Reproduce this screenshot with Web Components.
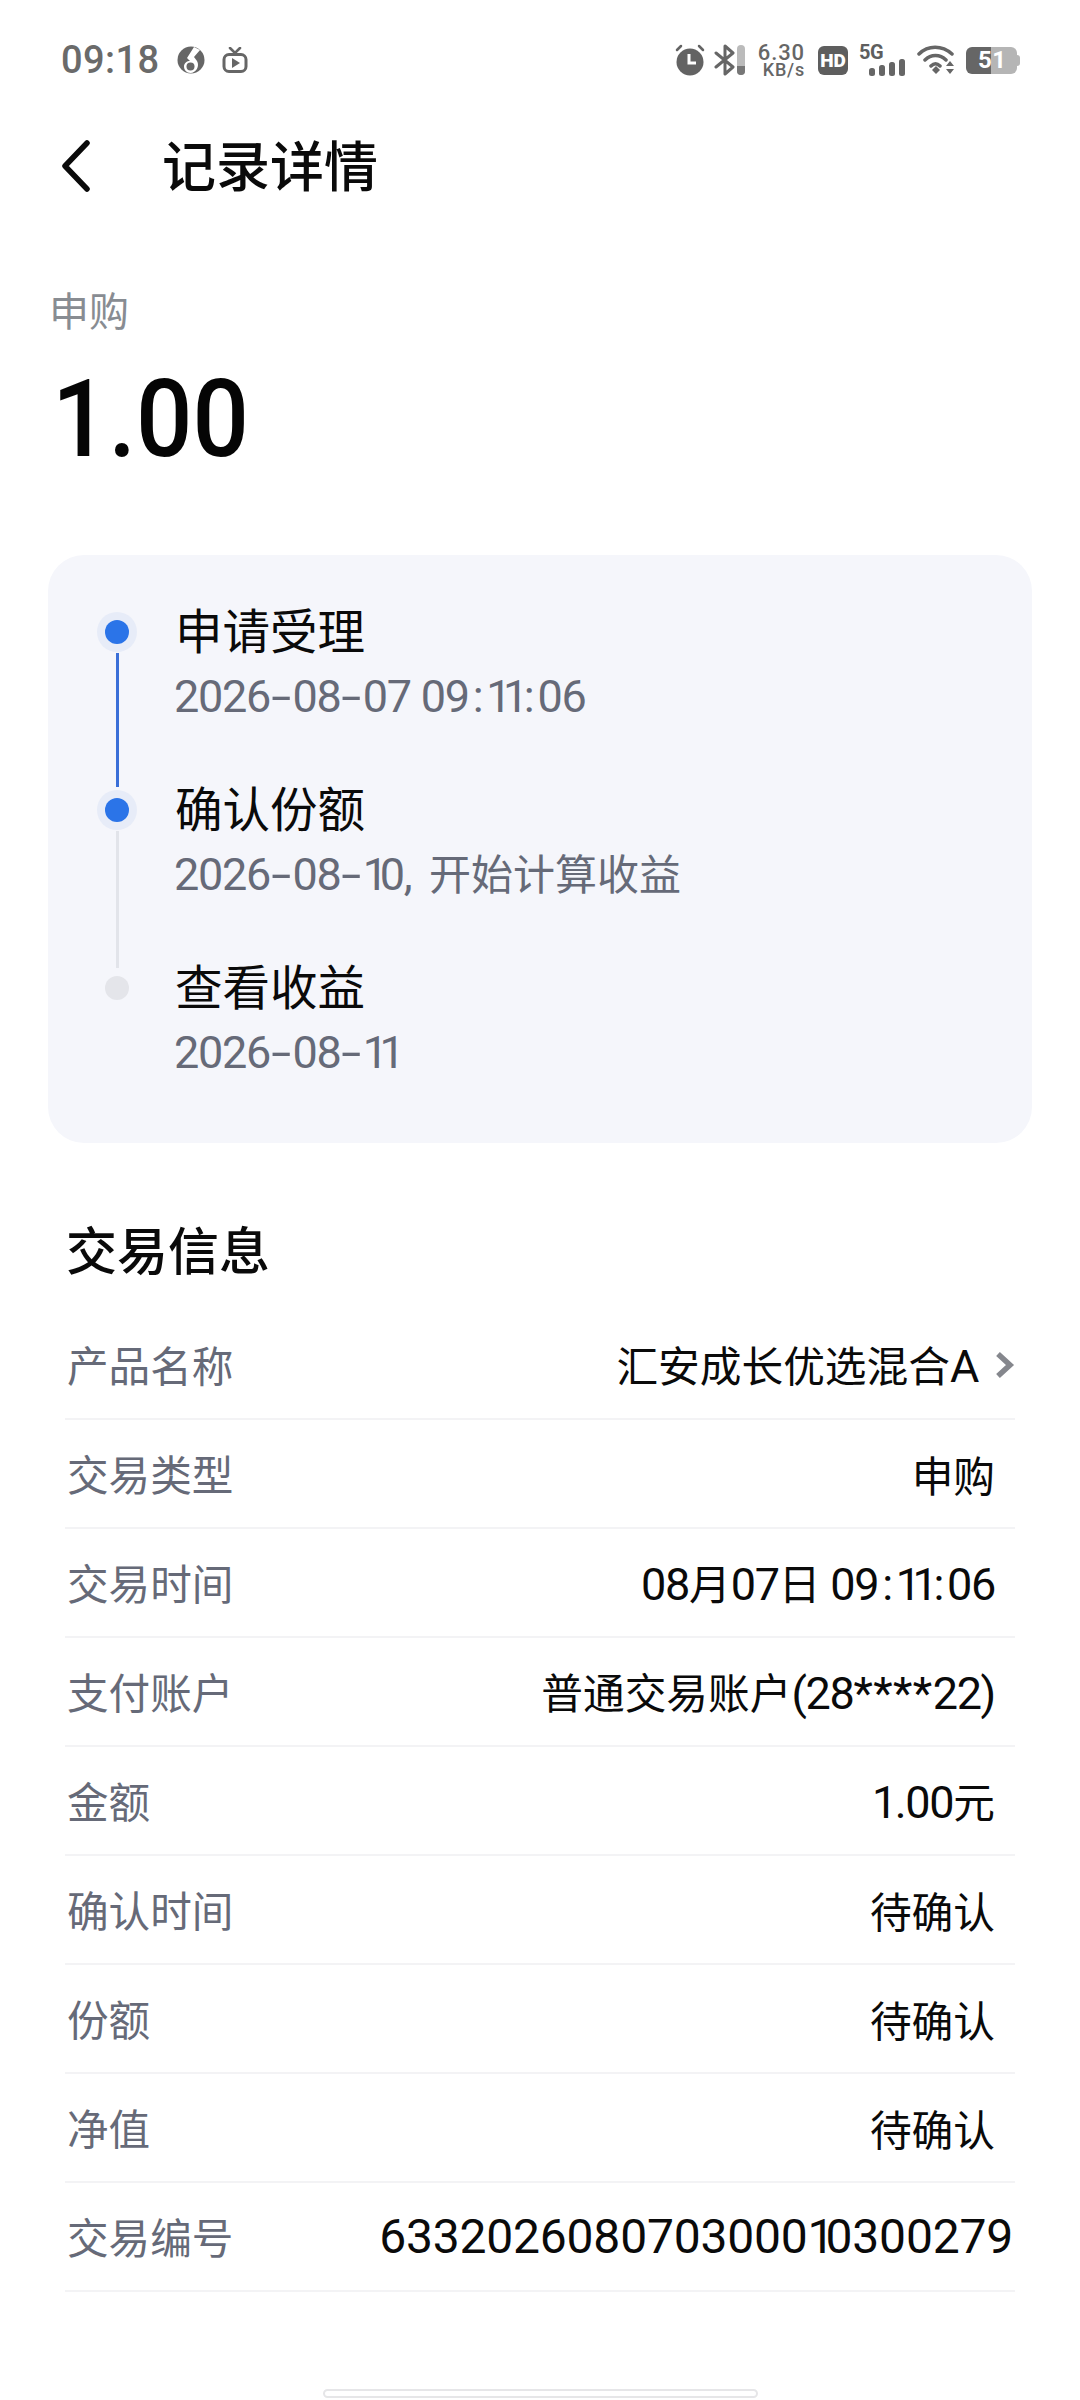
<!DOCTYPE html>
<html lang="zh-CN"><head><meta charset="utf-8"><title>记录详情</title>
<style>
html,body{margin:0;padding:0;background:#fff}
body{position:relative;font-family:Roboto,"Noto Sans CJK SC",sans-serif;width:1080px;height:2400px;overflow:hidden;display:flex;flex-direction:column}
</style></head><body>
<status-bar></status-bar>
<nav-header>记录详情</nav-header>
<amount-summary label="申购" amount="1.00"></amount-summary>
<time-line>
  <time-step state="done" title="申请受理" date="2026-08-07 09:11:06"></time-step>
  <time-step state="current" title="确认份额" date="2026-08-10, 开始计算收益"></time-step>
  <time-step state="todo" title="查看收益" date="2026-08-11" last></time-step>
</time-line>
<info-section heading="交易信息">
  <info-row label="产品名称" value="汇安成长优选混合A" link></info-row>
  <info-row label="交易类型" value="申购"></info-row>
  <info-row label="交易时间" value="08月07日 09:11:06"></info-row>
  <info-row label="支付账户" value="普通交易账户(28****22)"></info-row>
  <info-row label="金额" value="1.00元"></info-row>
  <info-row label="确认时间" value="待确认"></info-row>
  <info-row label="份额" value="待确认"></info-row>
  <info-row label="净值" value="待确认"></info-row>
  <info-row label="交易编号" value="633202608070300010300279" wide></info-row>
</info-section>
<home-bar></home-bar>
<script>
function def(name,html){
  customElements.define(name,class extends HTMLElement{
    connectedCallback(){
      if(this.shadowRoot)return;
      const r=this.attachShadow({mode:'open'});
      r.innerHTML=typeof html==='function'?html(this):html;
    }
  });
}
const a=(el,n)=>el.getAttribute(n)||'';
const numStyle=`
.n{font-family:Roboto,sans-serif;font-size:var(--n,45px);letter-spacing:var(--ls,-1.3px)}
.o{letter-spacing:var(--o,-8.5px)}
.h{display:inline-block;transform:scaleX(1.6);margin:0 5px;letter-spacing:0}
.k{margin:0 4px}
.w{letter-spacing:.4px}
.m{margin-right:8px}
.p{margin:0 0 0 6px}
`;
const fmt=s=>s.replace(/[0-9:\-,.*() A]+/g,m=>`<span class="n">${m
  .replace(/1+/g,x=>`<span class="o">${x}</span>`)
  .replace(/-/g,'<span class="h">-</span>')
  .replace(/:/g,'<span class="k">:</span>')
  .replace(/\*+/g,x=>`<span class="w">${x}</span>`)
  .replace(/\./g,'<span class="p">.</span>')
  .replace(/,/g,'<span class="m">,</span>')}</span>`);
def('status-bar',`<style>
:host{display:flex;align-items:center;height:118px;flex:none;padding:2px 60px 0 61px;box-sizing:border-box;color:#666}
.t{font:500 38px/1 Roboto,sans-serif;letter-spacing:.4px;color:#6a6a6a}
svg{display:block;flex:none}
.l{display:flex;align-items:center;gap:18px}
.r{margin-left:auto;display:flex;align-items:center}
.sp{font:500 18px/15px Roboto,sans-serif;text-align:right;width:48px;margin:0 13px 0 11px;letter-spacing:.8px;color:#666}
.sp b{display:block;font-weight:500;font-size:22px;line-height:18px;letter-spacing:.9px}
.hd{width:30px;height:29px;border-radius:6px;background:#5e5e5e;color:#fff;font:900 19px/29px Roboto,sans-serif;text-align:center;margin-right:11px}
.g{position:relative;width:46px;height:32px;margin-right:12px}
.g span{position:absolute;left:0;top:-2px;font:700 20px/20px Roboto,sans-serif;color:#5e5e5e;letter-spacing:-.5px}
.g svg{position:absolute;left:10px;top:14px}
.bat{position:relative;width:54px;height:27px;margin-left:11px}
.bat i{position:absolute;left:0;top:0;width:51px;height:27px;border-radius:6px;background:linear-gradient(90deg,#666 0 50%,#b5b5b5 50%)}
.bat u{position:absolute;right:0;top:8px;width:3px;height:11px;border-radius:0 3px 3px 0;background:#b5b5b5}
.bat span{position:absolute;left:12px;top:0;color:#fff;font:700 24px/27px Roboto,sans-serif;letter-spacing:.5px}
</style>
<div class="l"><span class="t">09:18</span>
<svg width="28" height="28" viewBox="0 0 28 28"><circle cx="14" cy="14" r="13.500" fill="#666"/><path d="M17 1 23 4 17 11 20 15C23 20 19 27 13.500 27 9.500 27 7 24 7 20.500 7 17 10 15 13 15L10 12Z" fill="#fff"/><circle cx="13.500" cy="20.500" r="4" fill="#666"/></svg>
<svg width="26" height="26" viewBox="0 0 26 26" style="margin-left:-1px"><path d="M8 1 13 6 18 1" fill="none" stroke="#666" stroke-width="2.600" stroke-linecap="round"/><rect x="2" y="7.500" width="22" height="17" rx="5" fill="none" stroke="#666" stroke-width="3"/><path d="M10 11 18 16 10 21Z" fill="#666"/></svg>
</div>
<div class="r">
<svg width="30" height="32" viewBox="0 0 30 32"><circle cx="15" cy="18" r="13.500" fill="#636363"/><path d="M14 10V19H21" fill="none" stroke="#fff" stroke-width="3"/><path d="M2 6 6 2M28 6 24 2" stroke="#636363" stroke-width="2.500" stroke-linecap="round"/></svg>
<svg width="32" height="32" viewBox="0 0 32 32" style="margin-left:9px"><path d="M2 9 19 23 11 30V2L19 9 2 23" fill="none" stroke="#666" stroke-width="3" stroke-linejoin="round" stroke-linecap="round"/><rect x="23" y="1" width="8" height="30" rx="4" fill="#bbb"/><path d="M23 22H31V27A4 4 0 0 1 23 27Z" fill="#777"/></svg>
<div class="sp"><b>6.30</b>KB/s</div>
<div class="hd">HD</div>
<div class="g"><span>5G</span><svg width="36" height="18" viewBox="0 0 36 18"><rect x="0" y="10" width="6" height="8" rx="2.500" fill="#666"/><rect x="10" y="7" width="6" height="11" rx="2.500" fill="#666"/><rect x="20" y="4" width="6" height="14" rx="2.500" fill="#666"/><rect x="30" y="1" width="6" height="17" rx="2.500" fill="#666"/></svg></div>
<svg width="38" height="30" viewBox="0 0 38 30"><path d="M2 9C11 0 25 0 35 9M8 15C14 9 23 9 29 15M14 21C17 18 20 18 23 21" fill="none" stroke="#666" stroke-width="3.500" stroke-linecap="round"/><path d="M15 25 19 21 23 25 19 29Z" fill="#666"/><path d="M29 21 33 16 37 21ZM29 24H37L33 29Z" fill="#666"/></svg>
<div class="bat"><i></i><u></u><span>51</span></div>
</div>`);
def('nav-header',`<style>
:host{display:flex;align-items:center;height:98px;flex:none;padding-left:61px;box-sizing:border-box}
svg{display:block;flex:none;margin-top:-2px}
.t{margin:-6px 0 0 71px;font:500 54px/1 "Noto Sans CJK SC",sans-serif;color:#0a0a0a}
</style><svg width="30" height="52" viewBox="0 0 30 52"><path d="M26 3 4 26 26 49" fill="none" stroke="#0a0a0a" stroke-width="5.500" stroke-linecap="round" stroke-linejoin="round"/></svg><div class="t"><slot></slot></div>`);
def('amount-summary',e=>`<style>
:host{display:block;flex:none;padding:68px 0 0 49px;height:339px;box-sizing:border-box}
.l{font:400 40px/50px "Noto Sans CJK SC",sans-serif;color:#888c92}
.a{margin:31px 0 0 3px;font:500 108px/108px Roboto,sans-serif;color:#050505;display:inline-block;transform:scaleX(.92);transform-origin:left center}
</style><div class="l">${a(e,'label')}</div><div class="a">${a(e,'amount')}</div>`);
def('time-line',`<style>
:host{display:block;flex:none;margin:0 48px;padding:57px 49px 65px;background:#f5f6fb;border-radius:36px}
</style><slot></slot>`);
def('time-step',e=>{
 const s=a(e,'state'),last=e.hasAttribute('last');
 const core=s==='todo'?'#e4e5ea':'#2b74e8';
 const ring=s==='todo'?'transparent':'#e7ecf8';
 const line=s==='done'?'#3a6fd8':'#e2e4ea';
 return `<style>
:host{display:grid;grid-template-columns:40px 1fr;column-gap:38px;${last?'':'height:178px;'}}
.rail{display:flex;flex-direction:column;align-items:center}
.dot{width:40px;height:40px;flex:none;border-radius:50%;background:${ring};display:flex;align-items:center;justify-content:center}
.dot i{display:block;width:24px;height:24px;border-radius:50%;background:${core}}
.ln{width:3px;flex:1;background:${line};margin:1px 0 ${s==='done'?'3':'0'}px}
.c{margin-top:-3px}
.t{font:400 47.500px/40px "Noto Sans CJK SC",sans-serif;color:#0a0a0a}
.d{margin:20px 0 0 -1px;font:400 42px/50px "Noto Sans CJK SC",sans-serif;color:#666a78;white-space:nowrap}
${numStyle}
</style><div class="rail"><div class="dot"><i></i></div>${last?'':'<div class="ln"></div>'}</div>
<div class="c"><div class="t">${a(e,'title')}</div><div class="d">${fmt(a(e,'date'))}</div></div>`;
});
def('info-section',e=>`<style>
:host{display:block;flex:none;margin:0 65px;padding-top:80px}
h2{margin:0 0 38px;padding-left:1px;font:500 51px/50px "Noto Sans CJK SC",sans-serif;color:#0a0a0a}
</style><h2>${a(e,'heading')}</h2><slot></slot>`);
def('info-row',e=>{
 const link=e.hasAttribute('link'),wide=e.hasAttribute('wide');
 return `<style>
:host{display:flex;align-items:center;justify-content:space-between;height:109px;box-sizing:border-box;padding:0 ${wide?'2px':link?'0':'20px'} 2px 2px;border-bottom:2px solid #f3f3f5;${wide?'--n:48px;--ls:-.2px;--o:-9px;':''}}
.l{font:400 41.600px/50px "Noto Sans CJK SC",sans-serif;color:#666a78;white-space:nowrap}
.v{display:flex;align-items:center;margin-top:${wide?'0':'3px'};font:400 41.700px/50px "Noto Sans CJK SC",sans-serif;color:#0a0a0a;white-space:pre}
svg{display:block;margin-left:17px}
${numStyle}
</style><div class="l">${a(e,'label')}</div><div class="v"><span>${fmt(a(e,'value'))}</span>${link?'<svg width="20" height="28" viewBox="0 0 20 28"><path d="M3 3 15 14 3 25" fill="none" stroke="#85878d" stroke-width="5.500"/></svg>':''}</div>`;
});
def('home-bar',`<style>
:host{display:block;position:absolute;left:323px;top:2389px;width:435px;height:9px;box-sizing:border-box;border:2px solid #e6e6e8;border-radius:5px;background:#fff}
</style>`);
</script>
</body></html>
